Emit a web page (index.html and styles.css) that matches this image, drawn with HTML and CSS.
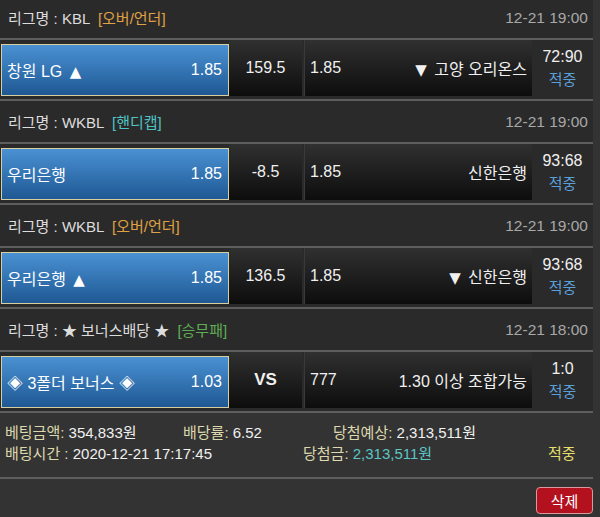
FILE: index.html
```html
<!DOCTYPE html>
<html lang="ko">
<head>
  <meta charset="UTF-8">
  <meta name="viewport" content="width=device-width, initial-scale=1.0">
  <title>배팅내역</title>
  <link rel="stylesheet" href="styles.css">
</head>
<body>
  <div class="slip">
    <!-- 경기 1 -->
    <div class="league">
      <span>리그명 : KBL <em class="tag over">[오버/언더]</em></span>
      <span class="time">12-21 19:00</span>
    </div>
    <div class="game">
      <div class="pick"><span>창원 LG <i class="arrow">▲</i></span><span>1.85</span></div>
      <div class="mid">159.5</div>
      <div class="away"><span>1.85</span><span><i class="arrow">▼</i> 고양 오리온스</span></div>
      <div class="score">72:90<span class="hit">적중</span></div>
    </div>

    <!-- 경기 2 -->
    <div class="league">
      <span>리그명 : WKBL <em class="tag handi">[핸디캡]</em></span>
      <span class="time">12-21 19:00</span>
    </div>
    <div class="game">
      <div class="pick"><span>우리은행</span><span>1.85</span></div>
      <div class="mid">-8.5</div>
      <div class="away"><span>1.85</span><span>신한은행</span></div>
      <div class="score">93:68<span class="hit">적중</span></div>
    </div>

    <!-- 경기 3 -->
    <div class="league">
      <span>리그명 : WKBL <em class="tag over">[오버/언더]</em></span>
      <span class="time">12-21 19:00</span>
    </div>
    <div class="game">
      <div class="pick"><span>우리은행 <i class="arrow">▲</i></span><span>1.85</span></div>
      <div class="mid">136.5</div>
      <div class="away"><span>1.85</span><span><i class="arrow">▼</i> 신한은행</span></div>
      <div class="score">93:68<span class="hit">적중</span></div>
    </div>

    <!-- 경기 4 -->
    <div class="league">
      <span>리그명 : ★ 보너스배당 ★ <em class="tag wdl">[승무패]</em></span>
      <span class="time">12-21 18:00</span>
    </div>
    <div class="game">
      <div class="pick"><span>◈ 3폴더 보너스 ◈</span><span>1.03</span></div>
      <div class="mid vs">VS</div>
      <div class="away"><span>777</span><span>1.30 이상 조합가능</span></div>
      <div class="score">1:0<span class="hit">적중</span></div>
    </div>

    <!-- 배팅 요약 -->
    <div class="summary">
      <div class="line">
        <span class="c1"><b>베팅금액:</b> 354,833원</span>
        <span class="c2"><b>배당률:</b> 6.52</span>
        <span><b>당첨예상:</b> 2,313,511원</span>
      </div>
      <div class="line">
        <span class="c1 wide"><b>배팅시간 :</b> 2020-12-21 17:17:45</span>
        <span class="c2 wide"><b>당첨금:</b> <i class="won">2,313,511원</i></span>
        <span class="result">적중</span>
      </div>
    </div>
    <div class="actions">
      <button type="button" class="delete">삭제</button>
    </div>
  </div>
</body>
</html>
```

FILE: styles.css
```css
body {
  margin: 0;
  background-color: #333333;
  font-family: "Liberation Sans", "Noto Sans CJK KR", sans-serif;
  color: #f0f0f0;
  overflow: hidden;
}

.slip {
  width: 593px;
  margin-top: -3px;
}

/* 리그 헤더 */
.league {
  height: 41px;
  display: flex;
  align-items: center;
  justify-content: space-between;
  padding: 0 5px 0 8px;
  background-color: #2a2a2a;
  border-bottom: 2px solid #5e5e5e;
  font-size: 15px;
  color: #dddddd;
}

.tag {
  font-style: normal;
  margin-left: 4px;
}

.over { color: #e0a244; }
.handi { color: #4fc4c4; }
.wdl { color: #5fae55; }

.time {
  color: #a8a8a8;
  font-size: 15.5px;
}

/* 경기 줄 */
.game {
  height: 59px;
  display: flex;
  background-color: #2a2a2a;
  border-bottom: 2px solid #5e5e5e;
  font-size: 16px;
}

.arrow {
  font-style: normal;
  font-family: "DejaVu Sans", sans-serif;
  font-size: 15px;
  margin: 0 3px;
}

.pick {
  width: 228px;
  height: 52px;
  box-sizing: border-box;
  margin: 4px 0 0 1px;
  padding: 0 6px 0 5px;
  display: flex;
  align-items: center;
  justify-content: space-between;
  border: 1px solid #d6cf9e;
  background: linear-gradient(#4a91d3, #1f5894);
  color: #ffffff;
}

.mid,
.away {
  height: 56px;
  display: flex;
  align-items: center;
  background: linear-gradient(#303030, #0d0d0d);
}

.mid {
  width: 73px;
  justify-content: center;
}

.vs {
  font-weight: bold;
  font-size: 17px;
}

.away {
  width: 228px;
  box-sizing: border-box;
  margin-left: 2px;
  padding: 0 5px 0 5px;
  justify-content: space-between;
  border-left: 1px solid #3a3a3a;
}

.score {
  flex: 1;
  display: flex;
  flex-direction: column;
  align-items: center;
  padding-top: 5px;
  line-height: 23px;
}

.hit {
  color: #5c9ed8;
  font-size: 15px;
}

/* 요약 */
.summary {
  height: 66px;
  padding: 9px 0 0 5px;
  box-sizing: border-box;
  border-bottom: 2px solid #5e5e5e;
  font-size: 15px;
}

.line {
  display: flex;
  line-height: 21px;
}

.summary b {
  font-weight: normal;
  color: #ddd8ad;
}

.c1 { width: 178px; }
.c2 { width: 150px; }
.c1.wide { width: 298px; }
.c2.wide { width: 245px; }

.won {
  font-style: normal;
  color: #5cc6c6;
}

.result {
  color: #e6df6c;
}

.actions {
  display: flex;
  justify-content: flex-end;
  padding-top: 8px;
}

.delete {
  width: 57px;
  height: 27px;
  padding: 0;
  border: 1px solid #d99a9f;
  border-radius: 4px;
  background-color: #b4111f;
  color: #ffffff;
  font-family: "Noto Sans CJK KR", sans-serif;
  font-size: 15px;
  cursor: pointer;
}
```
